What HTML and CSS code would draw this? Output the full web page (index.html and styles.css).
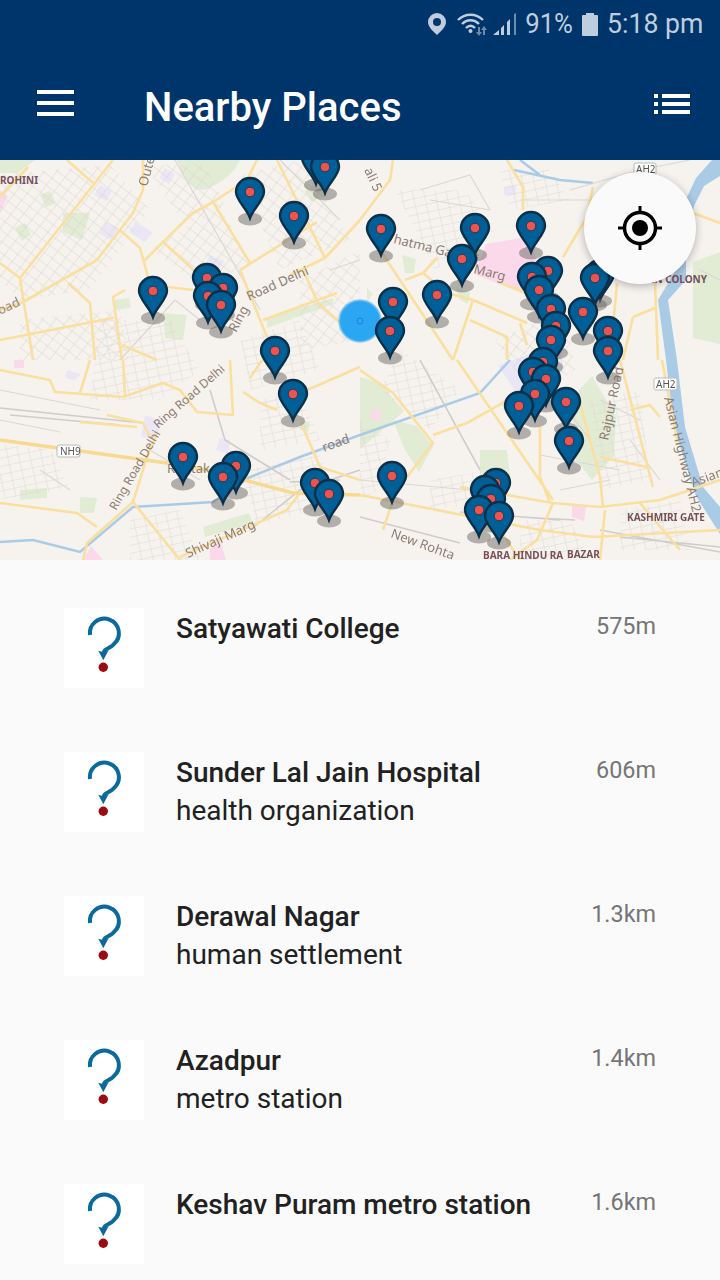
FILE: index.html
```html
<!DOCTYPE html>
<html lang="en">
<head>
<meta charset="utf-8">
<title>Nearby Places</title>
<link rel="stylesheet" href="styles.css">
</head>
<body>
<div class="app">
  <header class="header">
    <div class="status">
      <svg class="st-pin" width="18" height="22" viewBox="0 0 18 22"><path class="st-fill" fill-rule="evenodd" d="M9 0a9 9 0 0 1 9 9c0 5-5 9-9 13C5 18 0 14 0 9a9 9 0 0 1 9-9zm0 5a4 4 0 1 0 0 8 4 4 0 0 0 0-8z"/></svg>
      <svg class="st-wifi" width="30" height="23" viewBox="0 0 30 23">
        <path class="st-line" d="M1 7C8 0 19 0 26 7M5 11c5-5 12-5 17 0M9 15c3-3 6-3 9 0"/>
        <circle class="st-fill" cx="13.5" cy="18" r="2"/>
        <path class="st-dim" d="M21 14h2v5h2l-3 4-3-4h2zM27 13l3 4h-2v5h-2v-5h-2z"/>
      </svg>
      <svg class="st-sig" width="24" height="22" viewBox="0 0 24 22">
        <path class="st-fill" d="M0 22l6-5v5zM8 15l3-3v10H8zM14 9l3-3v16h-3z"/><path class="st-dim" d="M21 1l2-1v22h-2z"/>
      </svg>
      <span class="st-text st-pct">91%</span>
      <svg class="st-bat" width="16" height="23" viewBox="0 0 16 23"><path class="st-fill" d="M4 0h8v2h3a1 1 0 0 1 1 1v19a1 1 0 0 1-1 1H1a1 1 0 0 1-1-1V3a1 1 0 0 1 1-1h3z"/></svg>
      <span class="st-text st-time">5:18 pm</span>
    </div>
    <div class="toolbar">
      <div class="burger"><i></i><i></i><i></i></div>
      <h1 class="title">Nearby Places</h1>
      <svg class="listicon" width="36" height="20" viewBox="0 0 36 20">
        <path d="M0 0h4v4H0zM8 0h28v4H8zM0 8h4v4H0zM8 8h28v4H8zM0 16h4v4H0zM8 16h28v4H8z"/>
      </svg>
    </div>
  </header>

  <section class="map">
    <svg class="mapsvg" width="720" height="400" viewBox="0 160 720 400">
      <defs>
        <pattern id="gridA" width="10" height="9" patternUnits="userSpaceOnUse" patternTransform="rotate(38)">
          <path d="M0 0H10M0 0V9" fill="none" stroke="#d9d5d1" stroke-width="1"/>
        </pattern>
        <pattern id="gridB" width="11" height="8" patternUnits="userSpaceOnUse" patternTransform="rotate(-12)">
          <path d="M0 0H11M0 0V8" fill="none" stroke="#dbd7d3" stroke-width="1"/>
        </pattern>
        <radialGradient id="meGrad">
          <stop offset="0" stop-color="#2ba6f3"/>
          <stop offset=".88" stop-color="#2ba6f3"/>
          <stop offset="1" stop-color="#2ba6f3" stop-opacity=".25"/>
        </radialGradient>
        <g id="pin">
          <ellipse class="p-shadow" cx="0" cy="27" rx="12" ry="6.5"/>
          <path class="p-body" d="M0 26C-3 17-14 8-14 0A14 14 0 1 1 14 0C14 8 3 17 0 26Z"/>
          <circle class="p-dot" cx="0" cy="0" r="4.8"/>
        </g>
      </defs>

      <g class="base">
      <rect class="m-bg" x="0" y="160" width="720" height="400"/>

      <!-- land use -->
      <path class="m-green" d="M177 160h63c-6 14-20 24-36 30-12 2-22-16-27-30zM0 160h35l-17 13H0zM693 262l27-10v92l-27-6zM570 400l22-24 24 40-2 40-22 24-16-20zM480 450h27l3 27h-30zM360 377l20 6 24 28-11 10-33 28zM393 420l24 6 16 20-14 26-14-22zM203 527l46-14 4 10-48 14zM20 490l27-2v10l-27 2zM80 497l17 1-3 15h-14zM267 318l66-20v6l-66 24zM163 313l24 2-4 25-18-2zM63 213l27 0-8 27-19-8zM367 288l6 6-6 8zM456 288l14 4-2 12-8-4z"/>
      <path class="m-green" d="M402 255l14 4-2 14h-9zM305 190l14-6 6 12-14 6zM15 228l10-5 6 12-9 6zM40 195l10-4 6 12-10 4zM115 300l14-2 2 10-16 2zM300 420l10 2-2 10-8-2z"/>
      <path class="m-lav" d="M135 222l18 10-8 10-16-10zM100 185l12 6-6 10-12-6zM498 365l60-20 6 24-18 30h-26zM145 415l18 6-8 18-14-2zM220 438l10 2-2 14-12-4zM504 187l12-2v10h-12zM165 168l10 6-6 10-10-6zM210 255l14 6-10 18-14-4zM548 384l14 10-4 20-10-6zM67 370l14 4-6 6-10-2zM105 222l14 6-8 12-12-6z"/>
      <path class="m-pink" d="M0 190l8 6-8 16zM486 244l46-8 8 50-16 8-50-20zM572 505l14 2-2 14-12-4zM83 560l8-14 12 14zM372 408l10 4-4 10-8-4zM14 360h10v8h-10zM210 548l10-8 6 20h-16z"/>

      <!-- dense streets -->
      <path class="m-gridA" d="M0 175L110 165 150 210 90 290 20 300 0 280zM150 250l70-45 30 60-50 20zM240 175l60-15 50 80-70 30zM300 280l60-30v90l-60 10zM20 320l100-10 10 50H20zM145 165h60l20 40-40 20zM495 340l70-30 10 60-40 30z"/>
      <path class="m-gridB" d="M100 320h70l30 50-40 30h-70zM395 190h70l30 40-60 40zM240 470l80-15 16 50-80 20zM130 520l50-10 20 50h-70zM360 420l30 20-12 50-18 10zM430 480l60-10 10 30-70 10zM590 400l50-10 10 90-50 10zM620 510l60-10 10 50h-70zM520 520h50l20 40h-70zM500 170h50l20 30-60 10zM0 445l50 4 20 40-70 10zM240 340l60-20 20 50-70 20zM400 350l60 40-30 40-50-40zM260 400l40-10 20 50-60 10z"/>

      <!-- water -->
      <path class="m-water" d="M720 176L704 186 694 206 686 250 686 280 668 300 677 360 685 427 703 487 720 507V534L696 496 674 428 666 360 658 300 676 270 681 210 696 178 712 160H720z"/>
      <path class="m-canal" d="M0 542L33 540 80 552 133 507 213 502 250 477 300 457 360 435 480 393 510 360M514 170L560 180 593 183M540 175L520 160"/>

      <!-- rail and minor roads -->
      <path class="m-rail" d="M0 408L143 423M10 415L120 425M360 517L460 543M520 517L575 520M620 537L720 547M460 512L560 520M290 482L340 480M250 530L300 490 360 470M600 530L720 552M210 390L225 440 290 480M420 360L480 470"/>
      <path class="m-minor" d="M175 160L260 310M280 160L340 220M330 270L360 260M120 360L175 300M175 300L200 320M0 390L100 410M520 200L590 200M430 200L490 210M570 190L640 170M700 270L720 280M360 480L470 490M540 455L620 470M590 440L560 400M640 170L690 160M420 190L470 175 490 210M600 400L640 420M630 440L660 480M40 470L70 490M150 450L200 480M0 420L60 432M560 490L610 480"/>

      <!-- main roads -->
      <g class="m-road">
        <path d="M28 167L0 197M113 160L20 278 33 360M0 263L20 278M143 160V190L133 213 97 260 23 302 0 310M67 160L93 183M120 230L140 248 148 277M257 160L247 180 213 202 193 213 163 242 145 260M163 242L197 273M213 202L250 263M277 160L325 258M360 220L325 258 290 275M240 270L280 245 317 222M240 270L267 337M168 287L193 290M0 340L113 318M125 290L113 297 122 360M68 283L90 303 95 360M122 345L157 360M303 270L318 303 360 340M263 320L337 293"/>
        <path d="M393 160L390 180 360 220M380 250L453 360M507 160L523 187 523 210M405 280L423 273 437 258M423 273L447 293 473 300 527 323M473 300L453 360M470 320L507 337V360M500 283L527 293M593 187L587 217 563 257M617 283L610 360M655 283L658 360M633 317L655 308M633 317L623 360M693 213L720 223M520 323L527 345"/>
        <path d="M0 370L50 380 55 392 123 397 163 383 180 390 197 412 233 415 230 360M90 360L80 393M123 360L125 397M243 392L260 403 277 410M250 378L262 360M307 390L360 367M302 425L320 467 360 480M107 415L143 423 150 437M80 422L137 427M0 503L77 513 97 527M157 433L147 457 133 502 87 543 83 560M133 502L180 560M180 557L287 510 300 493 293 493"/>
        <path d="M360 370L393 393 433 443 407 477M457 360L553 500M433 435L467 423 520 393M360 495L540 530 593 537 720 530M460 487L553 503M553 503L600 507 660 500 720 480M540 427V477L550 503M577 393L600 477 603 507M620 360L653 487M662 360L678 445M630 410L650 405 660 417M600 457L647 467M553 503L537 540 510 560M393 500L383 530M500 530L520 560M605 510L600 560M640 503L680 550"/>
      </g>
      <path class="m-trunk" d="M0 440L167 463 207 470 293 493 360 495"/>

      <!-- labels -->
      <text class="m-place" x="0" y="184">ROHINI</text>
      <text class="m-lbl" transform="translate(147 187) rotate(-75)">Oute</text>
      <text class="m-lbl" transform="translate(236 333) rotate(-62)">Ring</text>
      <text class="m-lbl" transform="translate(249 301) rotate(-24)">Road Delhi</text>
      <text class="m-lbl" transform="translate(0 315) rotate(-25)">oad</text>
      <text class="m-lbl" transform="translate(364 170) rotate(65)">ali 5</text>
      <text class="m-lbl" transform="translate(393 243) rotate(14)">hatma Gandhi</text>
      <text class="m-lbl" transform="translate(473 273) rotate(14)">Marg</text>
      <text class="m-place m-end" x="707" y="283">IN COLONY</text>
      <text class="m-lbl m-sm" transform="translate(158 429) rotate(-41)">Ring Road Delhi</text>
      <text class="m-lbl m-sm" transform="translate(116 511) rotate(-60)">Ring Road Delhi</text>
      <text class="m-lbl" x="167" y="473">Rohtak</text>
      <text class="m-lbl" transform="translate(324 452) rotate(-20)">road</text>
      <text class="m-lbl" transform="translate(188 558) rotate(-24)">Shivaji Marg</text>
      <text class="m-lbl" transform="translate(390 537) rotate(20)">New Rohta</text>
      <text class="m-lbl" transform="translate(608 441) rotate(-78)">Rajpur Road</text>
      <text class="m-lbl" transform="translate(664 398) rotate(76)">Asian Highway AH2</text>
      <text class="m-lbl" transform="translate(693 487) rotate(-20)">Asian</text>
      <text class="m-place" x="627" y="521">KASHMIRI GATE</text>
      <text class="m-place" x="483" y="559">BARA HINDU RA</text>
      <text class="m-place" x="567" y="558">BAZAR</text>
      <g class="m-shield"><rect x="57" y="445" width="23" height="12" rx="2"/><text x="60" y="455">NH9</text></g>
      <g class="m-shield"><rect x="634" y="163" width="22" height="12" rx="2"/><text x="636" y="173">AH2</text></g>
      <g class="m-shield"><rect x="654" y="378" width="23" height="12" rx="2"/><text x="656" y="388">AH2</text></g>
      </g>

      <!-- markers -->
      <use href="#pin" x="316" y="158"/>
      <use href="#pin" x="325" y="167"/>
      <use href="#pin" x="250" y="192"/>
      <use href="#pin" x="294" y="216"/>
      <use href="#pin" x="475" y="228"/>
      <use href="#pin" x="381" y="229"/>
      <use href="#pin" x="531" y="226"/>
      <use href="#pin" x="462" y="259"/>
      <use href="#pin" x="437" y="295"/>
      <use href="#pin" x="153" y="291"/>
      <use href="#pin" x="207" y="278"/>
      <use href="#pin" x="223" y="288"/>
      <use href="#pin" x="208" y="296"/>
      <use href="#pin" x="221" y="305"/>
      <circle class="me" cx="360" cy="321" r="22"/>
      <circle class="me-core" cx="360" cy="321" r="3"/>
      <use href="#pin" x="393" y="302"/>
      <use href="#pin" x="390" y="331"/>
      <use href="#pin" x="275" y="351"/>
      <use href="#pin" x="293" y="394"/>
      <use href="#pin" x="548" y="271"/>
      <use href="#pin" x="532" y="277"/>
      <use href="#pin" x="539" y="290"/>
      <use href="#pin" x="600" y="274"/>
      <use href="#pin" x="595" y="278"/>
      <use href="#pin" x="551" y="309"/>
      <use href="#pin" x="583" y="312"/>
      <use href="#pin" x="556" y="326"/>
      <use href="#pin" x="551" y="340"/>
      <use href="#pin" x="608" y="331"/>
      <use href="#pin" x="608" y="351"/>
      <use href="#pin" x="543" y="362"/>
      <use href="#pin" x="533" y="372"/>
      <use href="#pin" x="546" y="379"/>
      <use href="#pin" x="535" y="394"/>
      <use href="#pin" x="519" y="406"/>
      <use href="#pin" x="566" y="402"/>
      <use href="#pin" x="569" y="441"/>
      <use href="#pin" x="183" y="457"/>
      <use href="#pin" x="236" y="466"/>
      <use href="#pin" x="223" y="477"/>
      <use href="#pin" x="315" y="483"/>
      <use href="#pin" x="329" y="494"/>
      <use href="#pin" x="392" y="476"/>
      <use href="#pin" x="496" y="483"/>
      <use href="#pin" x="485" y="490"/>
      <use href="#pin" x="491" y="499"/>
      <use href="#pin" x="479" y="510"/>
      <use href="#pin" x="499" y="516"/>
    </svg>
    <button class="locate" type="button" aria-label="My location">
      <svg width="46" height="46" viewBox="0 0 46 46">
        <circle cx="23" cy="23" r="15.5" fill="none" stroke="#000" stroke-width="3.5"/>
        <circle cx="23" cy="23" r="8"/>
        <path d="M21.5 1h3v6h-3zM21.5 39h3v6h-3zM1 21.5h6v3H1zM39 21.5h6v3h-6z"/>
      </svg>
    </button>
  </section>

  <ul class="places">
    <li class="place">
      <div class="thumb"><svg width="80" height="80" viewBox="0 0 80 80"><path class="q-arc" d="M26 27A14.5 14.5 0 1 1 50 36C46 41 39 40 39.5 47"/><path class="q-head" d="M34.3 42.7l5 1.5 5-1.5-5 9.5z"/><circle class="q-dot" cx="39.3" cy="59.3" r="4.7"/></svg></div>
      <div class="info"><div class="name">Satyawati College</div></div>
      <div class="dist">575m</div>
    </li>
    <li class="place">
      <div class="thumb"><svg width="80" height="80" viewBox="0 0 80 80"><path class="q-arc" d="M26 27A14.5 14.5 0 1 1 50 36C46 41 39 40 39.5 47"/><path class="q-head" d="M34.3 42.7l5 1.5 5-1.5-5 9.5z"/><circle class="q-dot" cx="39.3" cy="59.3" r="4.7"/></svg></div>
      <div class="info"><div class="name">Sunder Lal Jain Hospital</div><div class="kind">health organization</div></div>
      <div class="dist">606m</div>
    </li>
    <li class="place">
      <div class="thumb"><svg width="80" height="80" viewBox="0 0 80 80"><path class="q-arc" d="M26 27A14.5 14.5 0 1 1 50 36C46 41 39 40 39.5 47"/><path class="q-head" d="M34.3 42.7l5 1.5 5-1.5-5 9.5z"/><circle class="q-dot" cx="39.3" cy="59.3" r="4.7"/></svg></div>
      <div class="info"><div class="name">Derawal Nagar</div><div class="kind">human settlement</div></div>
      <div class="dist">1.3km</div>
    </li>
    <li class="place">
      <div class="thumb"><svg width="80" height="80" viewBox="0 0 80 80"><path class="q-arc" d="M26 27A14.5 14.5 0 1 1 50 36C46 41 39 40 39.5 47"/><path class="q-head" d="M34.3 42.7l5 1.5 5-1.5-5 9.5z"/><circle class="q-dot" cx="39.3" cy="59.3" r="4.7"/></svg></div>
      <div class="info"><div class="name">Azadpur</div><div class="kind">metro station</div></div>
      <div class="dist">1.4km</div>
    </li>
    <li class="place">
      <div class="thumb"><svg width="80" height="80" viewBox="0 0 80 80"><path class="q-arc" d="M26 27A14.5 14.5 0 1 1 50 36C46 41 39 40 39.5 47"/><path class="q-head" d="M34.3 42.7l5 1.5 5-1.5-5 9.5z"/><circle class="q-dot" cx="39.3" cy="59.3" r="4.7"/></svg></div>
      <div class="info"><div class="name">Keshav Puram metro station</div></div>
      <div class="dist">1.6km</div>
    </li>
  </ul>
</div>
</body>
</html>
```
FILE: styles.css
```css
* { box-sizing: border-box; }
html, body { margin: 0; padding: 0; }
body { background: #fafafa; font-family: Roboto, "Liberation Sans", sans-serif; }
.app { width: 720px; height: 1280px; overflow: hidden; display: flex; flex-direction: column; background: #fafafa; }

.header { background: #00356b; height: 160px; flex: none; color: #fff; }
.status { height: 48px; display: flex; align-items: center; justify-content: flex-end; padding: 0 17px 0 0; color: #bfcede; }
.st-pin { margin-right: 11px; }
.st-wifi { margin-right: 6px; }
.st-sig { margin-right: 4px; }
.st-bat { margin: 0 4px 0 9px; }
.st-fill { fill: #bfcede; }
.st-line { fill: none; stroke: #bfcede; stroke-width: 2.4; }
.st-dim { fill: #6d8aa8; }
.st-text { font-size: 28px; line-height: 48px; display: inline-block; transform-origin: right center; }
.st-pct { transform: scaleX(.92); }
.st-time { transform: scaleX(.95); }

.toolbar { height: 112px; display: flex; align-items: center; padding: 0 30px 0 37px; }
.burger { width: 37px; display: flex; flex-direction: column; gap: 7px; margin-top: -2px; }
.burger i { display: block; height: 4px; background: #fff; }
.title { margin: 8px 0 0 70px; font-size: 40px; font-weight: 500; line-height: 44px; flex: 1; }
.listicon { fill: #fff; }

.map { position: relative; height: 400px; flex: none; overflow: hidden; }
.mapsvg { display: block; }
.base { filter: blur(.35px); }
.m-bg { fill: #f6f3ef; }
.m-green { fill: #e2ebd4; }
.m-lav { fill: #ebe6f5; }
.m-pink { fill: #fbd9ea; }
.m-gridA { fill: url(#gridA); }
.m-gridB { fill: url(#gridB); }
.m-water { fill: #a9cbe6; }
.m-canal { fill: none; stroke: #a9cbe6; stroke-width: 2.5; }
.m-rail { fill: none; stroke: #cfcccb; stroke-width: 1.6; }
.m-minor { fill: none; stroke: #dbd7d3; stroke-width: 1.2; }
.m-road { fill: none; stroke: #fadf9e; stroke-width: 2.6; stroke-linejoin: round; }
.m-trunk { fill: none; stroke: #f8d98f; stroke-width: 3.5; }
.m-lbl { font-family: "Noto Sans", sans-serif; font-size: 13px; fill: #8c7d72; }
.m-sm { font-size: 12px; }
.m-place { font-family: "Noto Sans", sans-serif; font-size: 10px; font-weight: 700; fill: #77505c; }
.m-end { text-anchor: end; }
.m-shield rect { fill: #fff; stroke: #bbb; }
.m-shield text { font-family: "Noto Sans", sans-serif; font-size: 10px; fill: #555; }
.p-shadow { fill: #6e6a66; fill-opacity: .5; }
.p-body { fill: #005f96; stroke: #0d2f48; stroke-width: 2.4; }
.p-dot { fill: #ef5350; stroke: #243b4f; stroke-width: 1; }
.me { fill: url(#meGrad); }
.me-core { fill: none; stroke: #2186c9; stroke-width: 1; }

.locate { position: absolute; left: 584px; top: 12px; width: 112px; height: 112px; border: 0; padding: 0; border-radius: 50%; background: #fafafa; box-shadow: 0 2px 8px rgba(0,0,0,.28); display: flex; align-items: center; justify-content: center; }
.locate svg { display: block; }

.places { list-style: none; margin: 0; padding: 48px 64px 0; }
.place { display: flex; height: 144px; align-items: flex-start; }
.thumb { width: 80px; height: 80px; background: #fff; flex: none; }
.thumb svg { display: block; }
.q-arc { fill: none; stroke: #0a6a9c; stroke-width: 4; }
.q-head { fill: #0a6a9c; }
.q-dot { fill: #9a0a0f; }
.info { margin-left: 32px; flex: 1; min-width: 0; }
.name { font-size: 28px; font-weight: 500; line-height: 38px; color: #212121; margin-top: 2px; white-space: nowrap; }
.kind { font-size: 28px; line-height: 38px; color: #212121; white-space: nowrap; }
.dist { font-size: 23.4px; line-height: 34px; color: #757575; flex: none; margin-top: 1px; }
```
